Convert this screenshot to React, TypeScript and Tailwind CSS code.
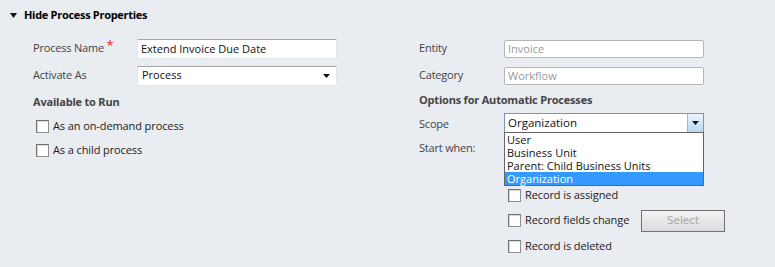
import { useState } from 'react';

const font = { fontFamily: '"Open Sans", "Liberation Sans", sans-serif' };

function Checkbox({ label }: { label: string }) {
  return (
    <label className="flex items-center gap-[4px] text-[11px] text-[#222] tracking-[-0.1px]">
      <span className="w-[13px] h-[13px] bg-white border border-[#8e8f8f] border-t-[#6f6f6f] border-l-[#6f6f6f] shadow-[inset_1px_1px_1px_#d5d5d5]" />
      {label}
    </label>
  );
}

function TextBox({ value, disabled }: { value: string; disabled?: boolean }) {
  return (
    <div
      className={
        disabled
          ? 'w-[200px] h-[18px] bg-white border border-[#b5b5b5] rounded-[2px] px-[3px] text-[11px] leading-[16px] text-[#9a9a9a]'
          : 'w-[200px] h-[20px] bg-white border border-[#e3e5e8] border-t-[#a6a6a6] px-[3px] text-[11px] leading-[18px] text-[#111]'
      }
    >
      {value}
    </div>
  );
}

const scopes = ['User', 'Business Unit', 'Parent: Child Business Units', 'Organization'];

export default function App() {
  const [scope] = useState('Organization');

  return (
    <div className="w-[775px] h-[267px] bg-[#e9ecf1] overflow-hidden relative" style={font}>
      <div className="flex items-center h-[30px] pl-[10px] gap-[7px]">
        <svg width="7" height="5" viewBox="0 0 7 5">
          <path d="M0 0 L7 0 L3.5 5 Z" fill="#111" />
        </svg>
        <span className="text-[11px] font-bold text-black tracking-[-0.3px]">Hide Process Properties</span>
      </div>

      <div className="flex pt-[5px]">
        {/* left column */}
        <div className="w-[386px] pl-[33px]">
          <div className="flex items-center h-[27px]">
            <span className="w-[104px] text-[11px] text-[#444] tracking-[-0.2px]">
              Process Name <span className="text-[#e31e24] text-[13px] leading-none relative top-[-2px]">*</span>
            </span>
            <TextBox value="Extend Invoice Due Date" />
          </div>
          <div className="flex items-center h-[27px]">
            <span className="w-[104px] text-[11px] text-[#444] tracking-[-0.2px]">Activate As</span>
            <div className="w-[200px] h-[20px] bg-white border border-[#e3e5e8] border-t-[#a6a6a6] pl-[4px] pr-[6px] flex items-center justify-between text-[11px] text-[#111]">
              Process
              <svg width="7" height="4" viewBox="0 0 7 4">
                <path d="M0 0 L7 0 L3.5 4 Z" fill="#111" />
              </svg>
            </div>
          </div>
          <div className="flex items-center h-[27px] text-[11px] font-bold text-[#444] tracking-[-0.2px]">Available to Run</div>
          <div className="flex items-center h-[20px] pl-[3px]">
            <Checkbox label="As an on-demand process" />
          </div>
          <div className="flex items-center h-[29px] pl-[3px]">
            <Checkbox label="As a child process" />
          </div>
        </div>

        {/* right column */}
        <div className="pl-[33px]">
          <div className="flex items-center h-[27px]">
            <span className="w-[85px] text-[11px] text-[#444] tracking-[-0.2px]">Entity</span>
            <TextBox value="Invoice" disabled />
          </div>
          <div className="flex items-center h-[27px]">
            <span className="w-[85px] text-[11px] text-[#444] tracking-[-0.2px]">Category</span>
            <TextBox value="Workflow" disabled />
          </div>
          <div className="flex items-center h-[23px] text-[11px] font-bold text-[#444] tracking-[-0.2px]">Options for Automatic Processes</div>
          <div className="flex items-center h-[21px]">
            <span className="w-[85px] text-[11px] text-[#444] relative top-[2px] tracking-[-0.2px]">Scope</span>
            <div className="relative">
              <div className="w-[200px] h-[20px] bg-white border border-[#7a96b4] flex items-center justify-between text-[11.5px] text-[#111]">
                <span className="pl-[3px]">{scope}</span>
                <span className="w-[16px] h-[18px] border-l border-[#9cb8d6] bg-gradient-to-b from-[#eaf4fc] to-[#b9d7f1] flex items-center justify-center">
                  <svg width="7" height="4" viewBox="0 0 7 4">
                    <path d="M0 0 L7 0 L3.5 4 Z" fill="#111" />
                  </svg>
                </span>
              </div>
              <div className="absolute left-0 top-[19px] w-[200px] bg-white border border-[#646464] z-10">
                {scopes.map((s) => (
                  <div
                    key={s}
                    className={
                      s === scope
                        ? 'h-[13px] px-[2px] text-[11px] leading-[13px] bg-[#3399ff] text-white'
                        : 'h-[13px] px-[2px] text-[11px] leading-[13px] text-[#111]'
                    }
                  >
                    {s}
                  </div>
                ))}
              </div>
            </div>
          </div>
          <div className="flex items-center h-[31px]">
            <span className="w-[89px] text-[11px] text-[#444] tracking-[-0.2px]">Start when:</span>
          </div>
          <div className="h-[19px]" />
          <div className="flex items-center h-[25px] pl-[89px]">
            <Checkbox label="Record is assigned" />
          </div>
          <div className="flex items-center h-[25px] pl-[89px]">
            <div className="w-[133px]">
              <Checkbox label="Record fields change" />
            </div>
            <button className="w-[84px] h-[22px] border border-[#707070] bg-gradient-to-b from-[#f3f3f3] to-[#dcdcdc] text-[#a8a8a8]" style={{ fontFamily: '"DejaVu Sans", "Liberation Sans", sans-serif', fontSize: '10.5px' }}>
              Select
            </button>
          </div>
          <div className="flex items-center h-[26px] pl-[89px]">
            <Checkbox label="Record is deleted" />
          </div>
        </div>
      </div>
    </div>
  );
}
